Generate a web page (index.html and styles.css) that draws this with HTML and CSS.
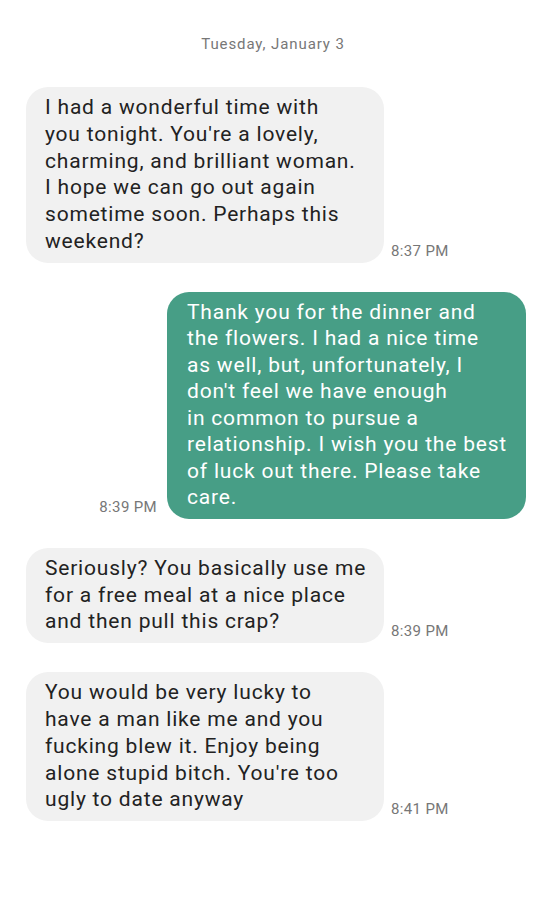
FILE: index.html
```html
<!DOCTYPE html>
<html lang="en">
<head>
  <meta charset="UTF-8">
  <title>Messages</title>
  <link rel="stylesheet" href="styles.css">
</head>
<body>
  <div class="thread">
    <div class="date">Tuesday, January 3</div>

    <div class="row in">
      <div class="bubble">I had a wonderful time with<br>you tonight. You're a lovely,<br>charming, and brilliant woman.<br>I hope we can go out again<br>sometime soon. Perhaps this<br>weekend?</div>
      <span class="time">8:37 PM</span>
    </div>

    <div class="row out">
      <span class="time">8:39 PM</span>
      <div class="bubble">Thank you for the dinner and<br>the flowers. I had a nice time<br>as well, but, unfortunately, I<br>don't feel we have enough<br>in common to pursue a<br>relationship. I wish you the best<br>of luck out there. Please take<br>care.</div>
    </div>

    <div class="row in">
      <div class="bubble">Seriously? You basically use me<br>for a free meal at a nice place<br>and then pull this crap?</div>
      <span class="time">8:39 PM</span>
    </div>

    <div class="row in">
      <div class="bubble">You would be very lucky to<br>have a man like me and you<br>fucking blew it. Enjoy being<br>alone stupid bitch. You're too<br>ugly to date anyway</div>
      <span class="time">8:41 PM</span>
    </div>
  </div>
</body>
</html>
```

FILE: styles.css
```css
* {
  margin: 0;
  padding: 0;
  box-sizing: border-box;
}
body {
  font-family: Roboto, "Liberation Sans", sans-serif;
  background: #fff;
  color: #222;
}
.thread {
  display: flex;
  flex-direction: column;
  gap: 29px;
  padding: 35px 28px 0 26px;
}
.date {
  text-align: center;
  font-size: 15px;
  letter-spacing: 0.9px;
  color: #777;
  margin: 0 6px 5px 0;
}
.row {
  display: flex;
  align-items: flex-end;
  gap: 7px;
}
.row.out {
  justify-content: flex-end;
  gap: 10px;
}
.bubble {
  width: 358px;
  padding: 7px 10px 8px 19px;
  border-radius: 22px;
  background: #f1f1f1;
  font-size: 21px;
  line-height: 26.8px;
  letter-spacing: 0.8px;
  white-space: nowrap;
}
.out .bubble {
  width: 359px;
  padding-left: 20px;
  line-height: 26.5px;
  background: #479e86;
  color: #fff;
}
.time {
  font-size: 15px;
  letter-spacing: 0.35px;
  color: #777;
  margin-bottom: 3px;
  white-space: nowrap;
}
```
